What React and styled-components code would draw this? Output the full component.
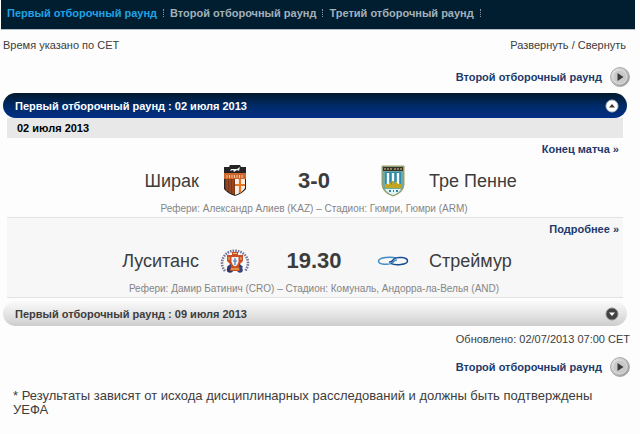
import { useState } from 'react';
import styled, { createGlobalStyle } from 'styled-components';

const GlobalStyle = createGlobalStyle`
  * {
    box-sizing: border-box;
  }

  body {
    margin: 0;
    background-color: #fdfdfd;
    color: #3c3c3c;
    font-family: 'Liberation Sans', Arial, sans-serif;
    font-size: 11px;
    line-height: 16px;
  }
`;

const Page = styled.main`
  padding: 0 5px 16px 1px;
`;

const RoundNav = styled.nav`
  display: flex;
  align-items: center;
  height: 30px;
  padding: 0 6px 4px;
  background-color: #011e30;
  border-bottom: 1px solid #b4bec6;
`;

const RoundLink = styled.a`
  display: flex;
  align-items: center;
  color: ${(props) => (props.$active ? '#1fa3e6' : '#a3b1bb')};
  font-weight: 700;
  text-decoration: none;
  white-space: nowrap;

  &::after {
    content: '';
    height: 8px;
    margin: 0 6px;
    border-right: 1px dotted #8595a0;
  }
`;

const Toolbar = styled.div`
  display: flex;
  justify-content: space-between;
  padding: 7px 9px 8px 2px;
`;

const TextButton = styled.button`
  padding: 0;
  border: 0;
  background: none;
  color: inherit;
  font: inherit;
  cursor: pointer;
`;

const NextRow = styled.div`
  display: flex;
  justify-content: flex-end;
  padding: 6px 5px 6px 0;
`;

const NextLink = styled.a`
  display: flex;
  align-items: center;
  gap: 8px;
  color: #1d3a6b;
  font-weight: 700;
  text-decoration: none;
`;

const Rounds = styled.div`
  padding: 0 8px 0 2px;
`;

const RoundTitle = styled.h2`
  margin: 0;
`;

const RoundBar = styled.button`
  display: flex;
  align-items: center;
  justify-content: space-between;
  width: 100%;
  height: 25px;
  padding: 0 8px 0 12px;
  border: 0;
  border-radius: 13px;
  background: ${(props) =>
    props.$open
      ? 'linear-gradient(#01192b, #002a66 50%, #002f87)'
      : 'linear-gradient(#fafafa, #e6e6e6 50%, #cdcdcd)'};
  color: ${(props) => (props.$open ? '#ffffff' : '#3c3c3c')};
  font-family: inherit;
  font-size: 11px;
  font-weight: 700;
  cursor: pointer;
`;

const RoundBody = styled.div`
  padding: 0 4px 3px;
`;

const DateStrip = styled.h3`
  margin: 0;
  padding: 2px 10px;
  background-color: #e8e8e8;
  color: #000000;
  font-size: 11px;
  line-height: 16px;
`;

const MatchCard = styled.article`
  padding: 3px 4px 0 2px;
  border-bottom: 1px solid #e2e2e2;
  background-color: ${(props) => (props.$shaded ? '#f7f7f7' : '#fdfdfd')};
`;

const DetailsRow = styled.div`
  display: flex;
  justify-content: flex-end;
`;

const DetailsLink = styled.a`
  color: #1d3a6b;
  font-weight: 700;
  text-decoration: none;
`;

const Teams = styled.div`
  display: grid;
  grid-template-columns: 1fr 72px 86px 72px 1fr;
  align-items: center;
  justify-items: center;
  height: 44px;
  padding-top: 4px;
`;

const TeamName = styled.span`
  justify-self: ${(props) => (props.$home ? 'end' : 'start')};
  font-size: 18px;
  line-height: 24px;
`;

const Score = styled.strong`
  font-size: 22px;
  line-height: 24px;
`;

const Referee = styled.p`
  margin: 0;
  color: #858585;
  font-size: 10px;
  line-height: 16px;
  text-align: center;
`;

const Updated = styled.p`
  margin: 0;
  padding: 5px 5px 4px 0;
  text-align: right;
`;

const Footnote = styled.p`
  margin: 6px 24px 0 12px;
  font-size: 13px;
  line-height: 14px;
`;

function NextIcon() {
  return (
    <svg width='20' height='20' viewBox='0 0 20 20' aria-hidden='true'>
      <defs>
        <linearGradient id='steel' x1='0' y1='0' x2='1' y2='1'>
          <stop offset='0' stopColor='#f4f4f4' />
          <stop offset='1' stopColor='#8e8e8e' />
        </linearGradient>
      </defs>
      <circle cx='10' cy='10' r='9.4' fill='url(#steel)' stroke='#a5a5a5' />
      <circle cx='10' cy='10' r='7' fill='#c9c9c9' stroke='#dedede' />
      <path d='M7.5 6 L13.5 10 L7.5 14 Z' fill='#3a3a3a' />
    </svg>
  );
}

function ToggleIcon({ open }) {
  return (
    <svg width='14' height='14' viewBox='0 0 14 14' aria-hidden='true'>
      <circle
        cx='7'
        cy='7'
        r='6'
        fill={open ? '#ffffff' : '#424242'}
        stroke={open ? '#b7bdc8' : '#8c8c8c'}
      />
      {open ? (
        <path d='M4 8.5 L7 5 L10 8.5 Z' fill='#3d362c' />
      ) : (
        <path d='M4 5.5 L7 9 L10 5.5 Z' fill='#ffffff' />
      )}
    </svg>
  );
}

function ShirakCrest() {
  return (
    <svg width='24' height='32' viewBox='0 0 24 32' aria-hidden='true'>
      <path d='M1 2 H6 L7 0 H17 L18 2 H23 V24 Q19 29 12 31 Q5 29 1 24 Z' fill='#252326' />
      <path d='M7 6 L8 4 L10 4 H14 L17 2 L16 6 L14 5 L11 7 L10 5 Z' fill='#f2f2f2' />
      <path d='M1 8 H23 V14 H1 Z' fill='#cf662b' />
      <path
        d='M4 10 V13 M6.5 10 V13 M9 10 V13 M11.5 10 V13 M14 10 V13 M16.5 10 V13 M19 10 V13'
        stroke='#f0c7a8'
      />
      <path d='M2 14 H12 V30 Q5 28 2 23 Z' fill='#7c3719' />
      <path d='M4 14 V26 M7 14 V28 M10 14 V29' stroke='#a85428' />
      <path d='M12 14 H22 V23 Q19 28 12 30 Z' fill='#f8eee5' />
      <path d='M17 14 V28 M12 20 H22' stroke='#e77624' strokeWidth='2.2' />
    </svg>
  );
}

function TrePenneCrest() {
  return (
    <svg width='24' height='32' viewBox='0 0 24 32' aria-hidden='true'>
      <path d='M1 1 H23 V20 Q22 28 12 31 Q2 28 1 20 Z' fill='#6fa9a4' stroke='#a69b58' />
      <path d='M2 2 H22 V6 H2 Z' fill='#393225' />
      <path d='M4 3 V5 M7 3 V5 M10 3 V5 M14 3 V5 M17 3 V5 M20 3 V5' stroke='#d9cf9b' />
      <path d='M4 7 H20 V22 H4 Z' fill='#2f8ba8' />
      <path d='M7 8 V20 M12 8 V18 M17 8 V20' stroke='#f4fbfb' strokeWidth='2.4' />
      <path d='M4 23 V19 H7 V20 L9 17 L11 20 V16 H13 V19 L15 16 L17 19 H20 V23 Z' fill='#c3a51f' />
      <path d='M4 24 H20 Q18 28 12 30 Q6 28 4 24 Z' fill='#e4f4f4' />
      <path d='M8 26 H10 M12 26 H13 M15 26 H17' stroke='#2d86a3' strokeWidth='2' />
    </svg>
  );
}

function LusitansCrest() {
  return (
    <svg width='30' height='28' viewBox='0 0 30 28' aria-hidden='true'>
      <circle cx='15' cy='14' r='13' fill='#fafafa' />
      <path
        d='M5 24 A13 12.4 0 1 1 25 24'
        fill='none'
        stroke='#77789a'
        strokeWidth='2.6'
        strokeDasharray='1.6 1'
      />
      <path d='M8 9 L22 21 M22 9 L8 21' stroke='#2e3f7c' strokeWidth='3' />
      <circle cx='10' cy='22.5' r='3.2' fill='#293a73' />
      <circle cx='20' cy='23' r='2.8' fill='#35457c' />
      <path d='M12 5 H18 V8 H23 V14 L19 18 L20 24 H10 L11 18 L7 14 V8 H12 Z' fill='#cb4e22' />
      <path d='M9 10 V13 M21 10 V13 M13 6.5 H17' stroke='#f0bd74' />
      <path d='M11.5 10 H18.5 V15 Q18 18 15 19.5 Q12 18 11.5 15 Z' fill='#eff3fa' />
      <path d='M15 11 V18 M13 14 H17' stroke='#4975ae' strokeWidth='1.2' />
      <path d='M11 22 H19' stroke='#e5a14b' strokeWidth='1.6' />
    </svg>
  );
}

function StreymurCrest() {
  return (
    <svg width='32' height='12' viewBox='0 0 32 12' aria-hidden='true'>
      <path
        d='M19 3 C14 1.4 2 2 1.5 6 C1.5 10 12 10 15 8 C17 6.6 17 5 20 5'
        fill='none'
        stroke='#3f8cc4'
        strokeWidth='1.5'
      />
      <path
        d='M12 7 C15 7.4 15 5.6 17 4 C20 1.6 30.5 2 30.5 6 C30.5 10 18 10.4 14 8.6'
        fill='none'
        stroke='#174c91'
        strokeWidth='1.5'
      />
    </svg>
  );
}

const roundNames = [
  'Первый отборочный раунд',
  'Второй отборочный раунд',
  'Третий отборочный раунд',
];

const rounds = [
  {
    id: 'leg-1',
    title: 'Первый отборочный раунд : 02 июля 2013',
    date: '02 июля 2013',
    matches: [
      {
        home: 'Ширак',
        HomeCrest: ShirakCrest,
        score: '3-0',
        away: 'Тре Пенне',
        AwayCrest: TrePenneCrest,
        details: 'Конец матча »',
        referee: 'Рефери: Александр Алиев (KAZ) – Стадион: Гюмри, Гюмри (ARM)',
      },
      {
        home: 'Луситанс',
        HomeCrest: LusitansCrest,
        score: '19.30',
        away: 'Стреймур',
        AwayCrest: StreymurCrest,
        details: 'Подробнее »',
        referee:
          'Рефери: Дамир Батинич (CRO) – Стадион: Комуналь, Андорра-ла-Велья (AND)',
      },
    ],
  },
  {
    id: 'leg-2',
    title: 'Первый отборочный раунд : 09 июля 2013',
    date: '09 июля 2013',
    matches: [],
  },
];

function NextRound() {
  return (
    <NextRow>
      <NextLink href='#next'>
        Второй отборочный раунд
        <NextIcon />
      </NextLink>
    </NextRow>
  );
}

function Match({ match, shaded }) {
  const { HomeCrest, AwayCrest } = match;

  return (
    <MatchCard $shaded={shaded}>
      <DetailsRow>
        <DetailsLink href='#match'>{match.details}</DetailsLink>
      </DetailsRow>
      <Teams>
        <TeamName $home>{match.home}</TeamName>
        <HomeCrest />
        <Score>{match.score}</Score>
        <AwayCrest />
        <TeamName>{match.away}</TeamName>
      </Teams>
      <Referee>{match.referee}</Referee>
    </MatchCard>
  );
}

export default function App() {
  const [openRounds, setOpenRounds] = useState(['leg-1']);

  function toggleRound(id) {
    setOpenRounds(
      openRounds.includes(id)
        ? openRounds.filter((roundId) => roundId !== id)
        : [...openRounds, id]
    );
  }

  return (
    <>
      <GlobalStyle />
      <Page>
        <RoundNav>
          {roundNames.map((name, index) => (
            <RoundLink key={name} href='#round' $active={index === 0}>
              {name}
            </RoundLink>
          ))}
        </RoundNav>
        <Toolbar>
          <span>Время указано по CET</span>
          <span>
            <TextButton
              type='button'
              onClick={() => setOpenRounds(rounds.map((round) => round.id))}
            >
              Развернуть
            </TextButton>
            {' / '}
            <TextButton type='button' onClick={() => setOpenRounds([])}>
              Свернуть
            </TextButton>
          </span>
        </Toolbar>
        <NextRound />
        <Rounds>
          {rounds.map((round) => {
            const open = openRounds.includes(round.id);
            return (
              <section key={round.id}>
                <RoundTitle>
                  <RoundBar
                    type='button'
                    $open={open}
                    aria-expanded={open}
                    onClick={() => toggleRound(round.id)}
                  >
                    {round.title}
                    <ToggleIcon open={open} />
                  </RoundBar>
                </RoundTitle>
                {open && (
                  <RoundBody>
                    <DateStrip>{round.date}</DateStrip>
                    {round.matches.map((match, index) => (
                      <Match
                        key={match.home}
                        match={match}
                        shaded={index % 2 === 1}
                      />
                    ))}
                  </RoundBody>
                )}
              </section>
            );
          })}
        </Rounds>
        <Updated>Обновлено: 02/07/2013 07:00 CET</Updated>
        <NextRound />
        <Footnote>
          * Результаты зависят от исхода дисциплинарных расследований и должны
          быть подтверждены УЕФА
        </Footnote>
      </Page>
    </>
  );
}
